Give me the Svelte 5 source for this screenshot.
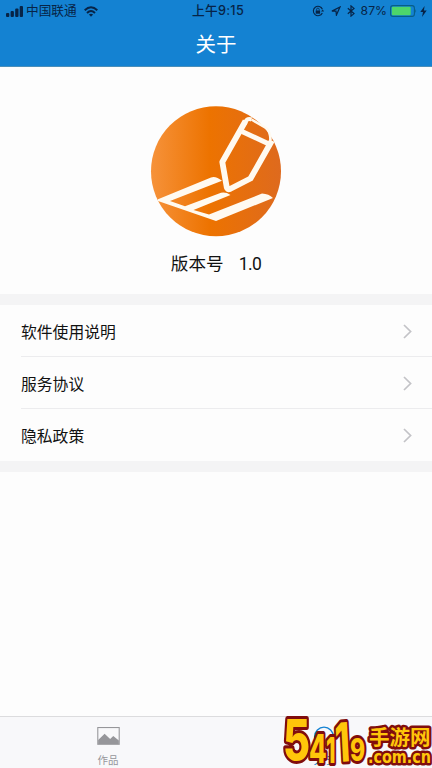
<script lang="ts">
    const menuItems = ['软件使用说明', '服务协议', '隐私政策'];
</script>

<main class="screen">
    <header>
        <div class="status-bar">
            <div class="status-left">
                <svg class="signal" width="18" height="11" viewBox="0 0 18 11">
                    <rect x="0" y="7" width="3.3" height="4" rx="1" />
                    <rect x="4.6" y="5" width="3.3" height="6" rx="1" />
                    <rect x="9.2" y="2.5" width="3.3" height="8.5" rx="1" />
                    <rect x="13.7" y="0" width="3.3" height="11" rx="1" />
                </svg>
                <span class="carrier">中国联通</span>
                <svg class="wifi" width="14" height="11" viewBox="0 0 14 11" fill="none" stroke="#072447" stroke-width="2">
                    <path d="M0.7 4.2 Q7 -1.6 13.3 4.2" />
                    <path d="M3 6.9 Q7 3.2 11 6.9" />
                    <path d="M4.9 8.6 Q7 6.8 9.1 8.6 L7 10.8z" fill="#072447" stroke="none" />
                </svg>
            </div>
            <span class="time">上午9:15</span>
            <div class="status-right">
                <svg class="lock" width="12" height="12" viewBox="0 0 12 12" fill="none" stroke="#072447">
                    <path d="M10.4 4.2 A4.7 4.7 0 1 0 10.3 8" stroke-width="1.1" />
                    <path d="M9 6.4 L10.8 4.6 L12 6.6z" fill="#072447" stroke="none" />
                    <rect x="3.7" y="5.5" width="4.4" height="3.2" fill="#072447" stroke="none" />
                    <path d="M4.6 5.6 V4.4 a1.3 1.3 0 0 1 2.6 0 V5.6" stroke-width="0.8" />
                </svg>
                <svg class="arrow" width="10" height="10" viewBox="0 0 10 10" fill="none" stroke="#072447" stroke-width="1.2">
                    <path d="M0.9 5.1 L9 1 L5.4 9.1 L5 5.2z" />
                </svg>
                <svg class="bluetooth" width="8" height="12" viewBox="0 0 8 12" fill="none" stroke="#072447">
                    <path d="M0.8 3.2 L7 8.6 L4 11.1 V0.9 L7 3.4 L0.8 8.8" stroke-width="1.2" />
                </svg>
                <span class="percent">87%</span>
                <svg class="battery" width="27" height="12" viewBox="0 0 27 12">
                    <rect x="0.6" y="0.6" width="23.8" height="10.8" rx="2.4" fill="#1482d2" stroke="#075e86" stroke-width="1.1" />
                    <rect x="1.8" y="1.8" width="18.9" height="8.4" rx="1" fill="#4cd66a" />
                    <path d="M25.4 4 Q27 6 25.4 8z" fill="#075e86" />
                </svg>
                <svg class="bolt" width="7" height="11" viewBox="0 0 7 11">
                    <path d="M4.6 0 L0.3 6 H3 L2 11 L6.7 4.5 H3.9z" />
                </svg>
            </div>
        </div>
        <h1>关于</h1>
    </header>

    <section class="about">
        <svg class="logo" width="132" height="132" viewBox="150 105 132 132">
            <defs>
                <linearGradient id="orange" x1="0" y1="0.5" x2="1" y2="0.5">
                    <stop offset="0" stop-color="#f6923a" />
                    <stop offset="0.45" stop-color="#ed7300" />
                    <stop offset="1" stop-color="#de6a1e" />
                </linearGradient>
            </defs>
            <circle cx="216" cy="171.3" r="65" fill="url(#orange)" />
            <!-- ruled lines under the pencil -->
            <path
                d="M158 199.3 L211 177.4 Q216 175.8 222 180.8 L170 201 L185 206.2 L221 192.8 Q226 191.8 230.5 195 L193.5 210 L209 214.6 L262 193.6 Q269 194 273 198 L216 220.9 L158 201z"
                fill="#fffaf0"
            />
            <!-- pencil -->
            <g fill="none" stroke="#fffaf0" stroke-linejoin="round">
                <path d="M245.5 121 L222.3 162 L226.8 187.5 Q227.5 190 230 189 L250.5 178.5 L272 140.5" stroke-width="5.8" />
                <path d="M242 131.5 L270 144.5" stroke-width="5" />
                <path d="M244.5 124.5 Q246 117.5 251.5 119.5" stroke-width="4" />
                <path d="M251.5 119.5 L266 128 Q270.5 131.5 270.5 140" stroke-width="2.6" />
            </g>
        </svg>
        <p class="version"><span>版本号</span><span class="number">1.0</span></p>
    </section>

    <nav class="menu">
        {#each menuItems as item}
            <a class="menu-item" href="#about">
                <span>{item}</span>
                <svg width="9" height="15" viewBox="0 0 9 15" fill="none" stroke="#c3c3c7" stroke-width="1.7">
                    <path d="M1 1 L7.6 7.5 L1 14" />
                </svg>
            </a>
        {/each}
    </nav>

    <footer class="tab-bar">
        <div class="tab">
            <svg width="25" height="20" viewBox="0 0 25 20">
                <rect x="0.6" y="0.6" width="23.8" height="18.6" fill="none" stroke="#96969a" stroke-width="1.2" />
                <path d="M1 19 V14.5 L8.2 7.5 L14.3 13.2 L17.8 10 L24 15 V19z" fill="#96969a" />
            </svg>
            <span>作品</span>
        </div>
        <div class="tab active">
            <svg width="22" height="22" viewBox="0 0 22 22" fill="none" stroke="#1482d2" stroke-width="1.5">
                <circle cx="11" cy="11" r="9.8" />
            </svg>
            <span>关于</span>
        </div>
    </footer>

    <svg class="watermark" width="150" height="54" viewBox="282 714 150 54">
        <g class="outline">
            <text class="digit" transform="translate(283 760) scale(0.73 1)" font-size="57">5</text>
            <text class="digit" transform="translate(309 763) scale(0.66 1)" font-size="39">4</text>
            <text class="digit" transform="translate(326 763) scale(0.6 1)" font-size="36">1</text>
            <text class="digit" transform="translate(336 762) rotate(-3) scale(0.62 1)" font-size="54">1</text>
            <text class="digit" transform="translate(350 761) scale(0.74 1)" font-size="31">9</text>
        </g>
        <g class="outline thin">
            <text x="369" y="745" font-size="20.5">手游网</text>
            <text class="domain" x="368" y="763" font-size="17" textLength="63" lengthAdjust="spacingAndGlyphs">.com.cn</text>
        </g>
    </svg>
</main>

<style>
    :global(body) {
        margin: 0;
        background: #fdfdfd;
    }

    .screen {
        position: relative;
        display: flex;
        flex-direction: column;
        height: 768px;
        overflow: hidden;
        background: #fdfdfd;
        color: #111;
        font-family: "Liberation Sans", "Noto Sans CJK SC", sans-serif;
    }

    header {
        box-sizing: border-box;
        height: 67px;
        background: #1482d2;
        border-bottom: 1px solid #4a8fba;
    }

    .status-bar {
        display: grid;
        grid-template-columns: 1fr auto 1fr;
        align-items: center;
        height: 22px;
        padding: 0 5px 0 6px;
        color: #072447;
        fill: #072447;
        font-size: 12.7px;
        line-height: 22px;
        font-family: Inter, "Noto Sans CJK SC", sans-serif;
    }

    .status-left,
    .status-right {
        display: flex;
        align-items: center;
    }

    .status-right {
        justify-content: flex-end;
    }

    .carrier {
        margin: 0 7px 0 2px;
    }

    .time {
        padding-left: 3px;
        font-weight: 500;
        letter-spacing: 0.3px;
    }

    .arrow {
        margin: 0 6px 0 7px;
    }

    .percent {
        margin: 0 3px 0 6px;
        font-size: 12.2px;
    }

    .bolt {
        margin-left: 3px;
    }

    h1 {
        margin: 0;
        padding-top: 1px;
        color: #fff;
        font-size: 20.5px;
        font-weight: 400;
        line-height: 43px;
        text-align: center;
    }

    .about {
        display: flex;
        flex-direction: column;
        align-items: center;
        box-sizing: border-box;
        height: 227px;
        padding-top: 38px;
    }

    .version {
        display: flex;
        gap: 15px;
        margin: 13px 0 0;
        font-family: "Noto Sans CJK SC", sans-serif;
        font-size: 17.6px;
        line-height: 26px;
    }

    .number {
        padding-top: 1px;
        font-family: Roboto, sans-serif;
        font-size: 17.5px;
        letter-spacing: -0.6px;
    }

    .menu {
        border-top: 11px solid #f4f4f5;
        border-bottom: 11px solid #f4f4f5;
    }

    .menu-item {
        display: flex;
        align-items: center;
        justify-content: space-between;
        box-sizing: border-box;
        height: 52px;
        margin-left: 21px;
        padding: 1px 20px 0 0;
        border-bottom: 1px solid #ececee;
        color: #111;
        font-size: 15.8px;
        text-decoration: none;
    }

    .menu-item:last-child {
        border-bottom: none;
    }

    .tab-bar {
        display: flex;
        box-sizing: border-box;
        height: 52px;
        margin-top: auto;
        background: #f8f8fa;
        border-top: 1px solid #dcdcde;
    }

    .tab {
        display: flex;
        flex: 1;
        flex-direction: column;
        align-items: center;
        gap: 8px;
        padding-top: 10px;
        color: #96969a;
        font-size: 10.5px;
        line-height: 15px;
    }

    .active {
        gap: 6px;
        padding-top: 9px;
        color: #1482d2;
    }

    .watermark {
        position: absolute;
        right: 0;
        bottom: 0;
    }

    .outline {
        fill: #ffc60a;
        stroke: #800d0d;
        stroke-width: 6px;
        stroke-linejoin: round;
        paint-order: stroke;
        font-family: "Noto Sans CJK SC", sans-serif;
        font-weight: 900;
    }

    .digit {
        font-family: Inter, sans-serif;
        font-weight: 800;
    }

    .thin {
        stroke-width: 5px;
        font-weight: 700;
    }

    .domain {
        font-family: "DejaVu Sans", sans-serif;
    }
</style>
